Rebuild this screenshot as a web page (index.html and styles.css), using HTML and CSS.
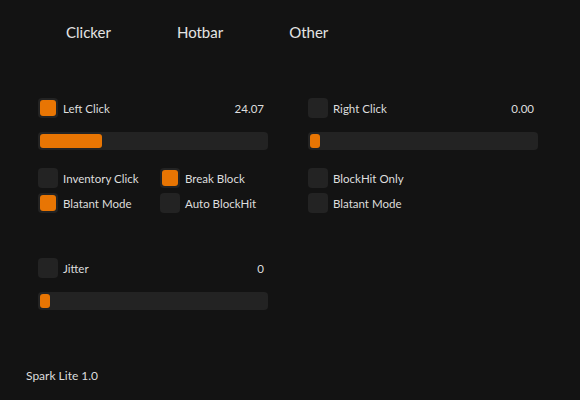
FILE: index.html
```html
<!DOCTYPE html>
<html>
<head>
<meta charset="utf-8">
<link rel="stylesheet" href="styles.css">
</head>
<body>
<div class="page">
  <nav class="tabs">
    <span class="tab">Clicker</span>
    <span class="tab">Hotbar</span>
    <span class="tab">Other</span>
  </nav>
  <main class="main">
    <section class="col">
      <div class="row">
        <span class="box on"></span>
        <span class="label">Left Click</span>
        <span class="value">24.07</span>
      </div>
      <div class="track"><div class="fill" style="width:62px"></div></div>
      <div class="checks">
        <div class="check"><span class="box"></span><span class="label">Inventory Click</span></div>
        <div class="check"><span class="box on"></span><span class="label">Break Block</span></div>
        <div class="check"><span class="box on"></span><span class="label">Blatant Mode</span></div>
        <div class="check"><span class="box"></span><span class="label">Auto BlockHit</span></div>
      </div>
      <div class="row jitter">
        <span class="box"></span>
        <span class="label">Jitter</span>
        <span class="value">0</span>
      </div>
      <div class="track"><div class="fill" style="width:10px"></div></div>
    </section>
    <section class="col">
      <div class="row">
        <span class="box"></span>
        <span class="label">Right Click</span>
        <span class="value">0.00</span>
      </div>
      <div class="track"><div class="fill" style="width:10px"></div></div>
      <div class="checks single">
        <div class="check"><span class="box"></span><span class="label">BlockHit Only</span></div>
        <div class="check"><span class="box"></span><span class="label">Blatant Mode</span></div>
      </div>
    </section>
  </main>
  <footer class="footer">Spark Lite 1.0</footer>
</div>
</body>
</html>
```
FILE: styles.css
```css
html, body {
  margin: 0;
  padding: 0;
  background: #131313;
}
.page {
  width: 580px;
  height: 400px;
  display: flex;
  flex-direction: column;
  font-family: Lato, "Liberation Sans", sans-serif;
  color: #dedede;
  background: #131313;
  box-sizing: border-box;
}
.tabs {
  display: flex;
  align-items: center;
  gap: 66px;
  height: 64px;
  padding-left: 66px;
  font-size: 15px;
  color: #e4e4e4;
}
.main {
  display: grid;
  grid-template-columns: 230px 230px;
  column-gap: 40px;
  padding: 34px 0 0 38px;
  align-items: start;
}
.col {
  display: flex;
  flex-direction: column;
}
.row {
  display: flex;
  align-items: center;
  height: 20px;
  font-size: 11.5px;
}
.row .value {
  margin-left: auto;
  margin-right: 4px;
}
.box {
  width: 20px;
  height: 20px;
  box-sizing: border-box;
  border-radius: 4px;
  background: #232323;
  padding: 2px;
  flex: none;
  display: block;
}
.box.on::after {
  content: "";
  display: block;
  width: 100%;
  height: 100%;
  border-radius: 3px;
  background: #e87503;
}
.label {
  margin-left: 5px;
}
.track {
  margin-top: 14px;
  height: 18px;
  border-radius: 4px;
  background: #232323;
  padding: 2px;
  box-sizing: border-box;
}
.fill {
  height: 100%;
  border-radius: 3px;
  background: #e87503;
}
.checks {
  margin-top: 18px;
  display: grid;
  grid-template-columns: 122px 108px;
  row-gap: 5px;
  font-size: 11.5px;
}
.checks.single {
  grid-template-columns: 230px;
}
.check {
  display: flex;
  align-items: center;
  height: 20px;
}
.jitter {
  margin-top: 45px;
}
.footer {
  margin-top: auto;
  padding: 0 0 16px 26px;
  font-size: 12px;
  line-height: 16px;
  color: #dcdcdc;
}
```
